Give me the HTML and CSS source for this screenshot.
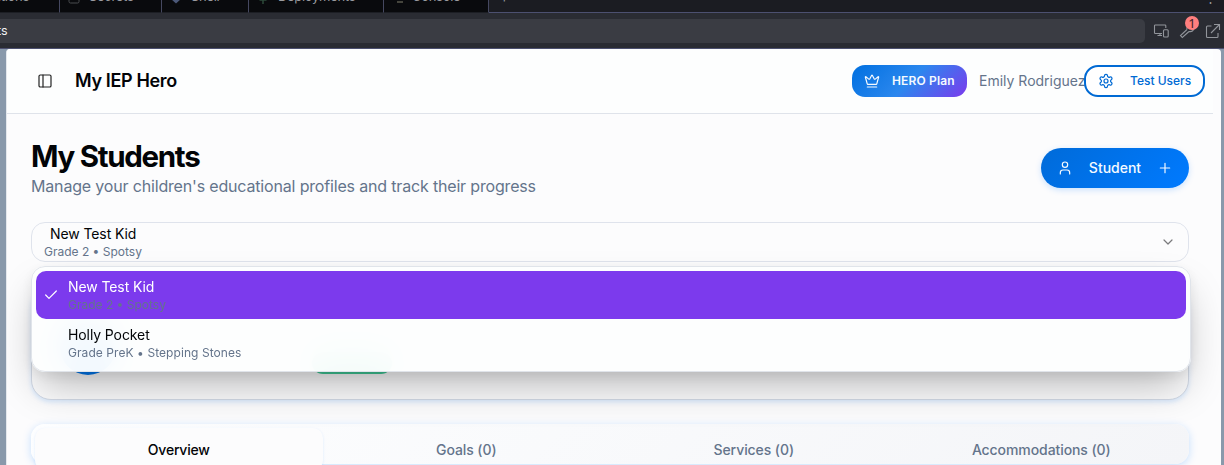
FILE: index.html
```html
<!DOCTYPE html>
<html lang="en">
<head>
<meta charset="utf-8">
<title>My IEP Hero</title>
<link rel="stylesheet" href="styles.css">
</head>
<body>
<nav class="ide-tabs">
  <div class="ide-tab tab-first"><span>Integrations</span></div>
  <div class="ide-tab tab-secrets"><svg width="12" height="14" viewBox="0 0 12 14"><rect x="1" y="4" width="10" height="9" rx="1.5" fill="none" stroke="#4a4c50"/></svg><span>Secrets</span></div>
  <div class="ide-tab tab-shell"><svg width="12" height="14" viewBox="0 0 12 14"><path d="M1 3h10v6l-5 4.500-5-4.500z" fill="#4b5878"/></svg><span>Shell</span></div>
  <div class="ide-tab tab-deploy"><svg width="12" height="14" viewBox="0 0 12 14"><path d="M6 2v12M2.500 10h7" stroke="#2c4a3a" stroke-width="1.500" fill="none"/></svg><span>Deployments</span></div>
  <div class="ide-tab tab-console"><svg width="14" height="14" viewBox="0 0 14 14"><path d="M1 9l3-3M6 12h6" stroke="#5a594e" stroke-width="1.500" fill="none"/></svg><span>Console</span></div>
  <div class="ide-rest"><span>+</span><span>⋮</span></div>
</nav>
<div class="ide-bar">
  <div class="address">ts</div>
  <svg class="tool" width="16" height="16" viewBox="0 0 16 16"><path d="M9 10.500H2.300a.8.800 0 0 1-.8-.8V2.800a.8.800 0 0 1 .8-.8h9.700a.8.800 0 0 1 .8.800V5M4.500 12.500h4.500M7 10.500v2"/><rect x="10.500" y="6.800" width="4.700" height="7.200" rx="1"/></svg>
  <div class="wrench"><svg class="tool" width="16" height="16" viewBox="0 0 16 16"><path d="M8 6.500L1.500 12.500l1.800 2L10 8.500M8 6.500c-.5-2 .5-4.500 3-5M10 8.500c2 .5 4-.5 4.800-2.500"/></svg><span class="count">1</span></div>
  <svg class="tool" width="16" height="16" viewBox="0 0 16 16"><path d="M6.500 3H2.500A1 1 0 0 0 1.500 4v9.500a1 1 0 0 0 1 1H12a1 1 0 0 0 1-1V10M9 1.500h5.500V7M14.500 1.500L6 10"/></svg>
</div>
<main class="preview">
  <div class="app">
    <header class="app-header">
      <svg class="line panel-icon" width="16" height="16" viewBox="0 0 24 24"><rect x="3" y="3" width="18" height="18" rx="2"/><path d="M9 3v18"/></svg>
      <div class="brand">My IEP Hero</div>
      <div class="plan"><svg class="line" width="16" height="16" viewBox="0 0 24 24"><path d="M11.562 3.266a.5.500 0 0 1 .876 0L15.390 8.870a1 1 0 0 0 1.516.294L21.183 5.500a.5.500 0 0 1 .798.519l-2.834 10.246a1 1 0 0 1-.956.734H5.810a1 1 0 0 1-.957-.734L2.020 6.020a.5.500 0 0 1 .798-.519l4.276 3.664a1 1 0 0 0 1.516-.294zM5 21h14"/></svg><span>HERO Plan</span></div>
      <div class="user">Emily Rodriguez</div>
      <div class="test-users"><svg class="line" width="16" height="16" viewBox="0 0 24 24"><path d="M12.220 2h-.44a2 2 0 0 0-2 2v.18a2 2 0 0 1-1 1.730l-.43.250a2 2 0 0 1-2 0l-.15-.08a2 2 0 0 0-2.730.730l-.22.380a2 2 0 0 0 .73 2.730l.15.100a2 2 0 0 1 1 1.720v.51a2 2 0 0 1-1 1.740l-.15.090a2 2 0 0 0-.73 2.730l.22.380a2 2 0 0 0 2.730.730l.15-.08a2 2 0 0 1 2 0l.43.250a2 2 0 0 1 1 1.730V20a2 2 0 0 0 2 2h.44a2 2 0 0 0 2-2v-.18a2 2 0 0 1 1-1.730l.43-.25a2 2 0 0 1 2 0l.15.080a2 2 0 0 0 2.730-.73l.22-.39a2 2 0 0 0-.73-2.730l-.15-.08a2 2 0 0 1-1-1.740v-.5a2 2 0 0 1 1-1.740l.15-.09a2 2 0 0 0 .73-2.730l-.22-.38a2 2 0 0 0-2.730-.73l-.15.080a2 2 0 0 1-2 0l-.43-.25a2 2 0 0 1-1-1.730V4a2 2 0 0 0-2-2z"/><circle cx="12" cy="12" r="3"/></svg><span>Test Users</span></div>
    </header>
    <section class="content">
      <div class="title-row">
        <div>
          <h1>My Students</h1>
          <p class="subtitle">Manage your children's educational profiles and track their progress</p>
        </div>
        <div class="add-student"><svg class="line" width="16" height="16" viewBox="0 0 24 24"><path d="M19 21v-2a4 4 0 0 0-4-4H9a4 4 0 0 0-4 4v2"/><circle cx="12" cy="7" r="4"/></svg><span>Student</span><svg class="line" width="16" height="16" viewBox="0 0 24 24"><path d="M5 12h14M12 5v14"/></svg></div>
      </div>
      <div class="picker">
        <div class="select">
          <div><div class="name selected-name">New Test Kid</div><div class="meta">Grade 2 • Spotsy</div></div>
          <svg class="line chevron" width="16" height="16" viewBox="0 0 24 24"><path d="m6 9 6 6 6-6"/></svg>
        </div>
        <div class="menu">
          <div class="option active"><svg class="line" width="16" height="16" viewBox="0 0 24 24"><path d="M20 6 9 17l-5-5"/></svg><div><div class="name">New Test Kid</div><div class="meta">Grade 2 • Spotsy</div></div></div>
          <div class="option"><i class="blank"></i><div><div class="name">Holly Pocket</div><div class="meta meta-wide">Grade PreK • Stepping Stones</div></div></div>
        </div>
      </div>
      <div class="card"><div class="avatar"></div><div class="badge"></div></div>
      <div class="tabs">
        <div class="tab current">Overview</div><div class="tab">Goals (0)</div><div class="tab">Services (0)</div><div class="tab">Accommodations (0)</div>
      </div>
    </section>
  </div>
</main>
</body>
</html>
```
FILE: styles.css
```css
* { box-sizing: border-box; }
body { margin: 0; width: 1224px; height: 465px; overflow: hidden; font-family: Inter, "Liberation Sans", sans-serif; color: #020407; }
svg { flex: none; display: block; }
.line { fill: none; stroke: currentColor; stroke-width: 1.8; stroke-linecap: round; stroke-linejoin: round; }

.ide-tabs { display: flex; align-items: flex-end; height: 13px; overflow: hidden; background: #090a0d; color: #9a9ca0; font-size: 13px; }
.ide-tab { display: flex; flex: none; gap: 9px; height: 29px; padding-top: 3px; border-right: 1px solid #454860; border-bottom: 1px solid #1c1e24; line-height: 18px; letter-spacing: -0.3px; }
.ide-tab svg { margin-top: 3px; }
.tab-first { width: 60px; justify-content: flex-end; padding-right: 30px; }
.tab-secrets { width: 102px; padding-left: 8px; }
.tab-shell { width: 87px; padding-left: 8px; }
.tab-deploy { width: 135px; padding-left: 8px; }
.tab-console { width: 105px; padding-left: 7px; gap: 7px; }
.ide-rest { display: flex; flex: 1; justify-content: space-between; height: 29px; padding: 4px 7px 0 11px; background: #1b1c22; border-bottom: 1px solid #4c5070; line-height: 18px; }

.ide-bar { display: flex; align-items: center; gap: 10px; height: 36px; padding-right: 3px; background: #2a2c33; border-bottom: 1px solid #4c5070; color: #92959b; }
.address { width: 1145px; height: 24px; flex: none; margin-right: -2px; border-radius: 0 5px 5px 0; background: #3a3c43; color: #f2f3f4; font-size: 12.5px; line-height: 24px; text-indent: -3px; }
.tool { fill: none; stroke: currentColor; stroke-width: 1.1; }
.wrench { position: relative; }
.count { position: absolute; left: 6px; top: -7px; width: 14px; height: 14px; border-radius: 50%; background: #ff7f7f; color: #3b2024; font-family: "Noto Sans", sans-serif; font-size: 13px; line-height: 14px; text-align: center; }

.preview { height: 416px; padding: 0 3px 0 6px; background: #8999ab; }
.app { height: 416px; border-left: 1px solid #e4e8ed; border-radius: 4px 4px 0 0; background: #fcfcfd; overflow: hidden; }
.app-header { display: flex; align-items: center; width: 1206px; height: 65px; padding: 0 8px 0 30px; background: #fdfefe; border-bottom: 1px solid #dfe3ea; }
.panel-icon { color: #222; }
.brand { margin-left: 22px; padding-bottom: 2px; font-size: 18px; font-weight: 600; letter-spacing: -0.35px; }
.plan { display: flex; align-items: center; gap: 12px; width: 115px; height: 32px; margin-left: auto; padding-left: 12px; border-radius: 13px; background: linear-gradient(135deg, #0070e0, #2b87ee 50%, #7c3aed); color: #f5faff; font-size: 12px; font-weight: 600; letter-spacing: 0.15px; white-space: nowrap; }
.plan span, .test-users span { padding-bottom: 1px; }
.user { width: 105px; margin-left: 12px; padding-bottom: 2px; color: #64748b; font-size: 14px; white-space: nowrap; }
.test-users { display: flex; align-items: center; gap: 16px; width: 121px; height: 32px; padding-left: 12px; border: 2px solid #006ad4; border-radius: 14px; background: #fff; color: #006ad4; font-size: 12px; font-weight: 500; white-space: nowrap; }

.content { width: 1206px; padding: 24px 24px 0; }
.title-row { display: flex; justify-content: space-between; align-items: center; height: 60px; }
h1 { margin: 0; padding-top: 1px; font-size: 29.5px; font-weight: 700; line-height: 35px; letter-spacing: -1.3px; }
.subtitle { margin: 0; color: #64748b; font-size: 16px; line-height: 24px; letter-spacing: -0.17px; }
.add-student { display: flex; align-items: center; width: 148px; height: 40px; padding: 0 16px; border-radius: 20px; background: linear-gradient(135deg, #006bd9, #007aff); box-shadow: 0 2px 6px #007aff33; color: #f5faff; font-size: 14px; font-weight: 500; }
.add-student span { margin: 0 auto; padding-bottom: 2px; }

.picker { position: relative; margin-top: 24px; z-index: 2; }
.select { display: flex; justify-content: space-between; align-items: center; height: 40px; padding: 0 12px; border: 1px solid #dfe3ec; border-radius: 14px; background: #fcfcfd; }
.name { font-size: 14px; line-height: 20px; letter-spacing: -0.1px; }
.selected-name { padding-left: 6px; }
.meta { color: #64748b; font-size: 12px; line-height: 16px; }
.meta-wide { letter-spacing: 0.07px; }
.chevron { color: #7a7a7c; }
.menu { position: absolute; left: 0; top: 44px; width: 1160px; height: 106px; padding: 4px; border: 1px solid #e0e4ea; border-radius: 14px; background: #fdfefef4; backdrop-filter: blur(16px); box-shadow: 0 20px 40px -8px #00000048, 0 4px 14px #00000012; }
.option { display: flex; align-items: center; gap: 9px; height: 48px; padding-left: 7px; border-radius: 10px; }
.active { background: #7c3aed; color: #fff; }
.blank { width: 16px; }

.card { display: flex; align-items: flex-end; gap: 210px; height: 114px; margin-top: 24px; padding: 0 0 24px 28px; border: 1px solid #d3dae6; border-radius: 20px; background: #fcfcfd; box-shadow: 0 2px 5px #007aff26; }
.avatar { width: 56px; height: 56px; border-radius: 50%; background: #0078f0; }
.badge { width: 80px; height: 22px; margin: 0 0 1px -14px; border-radius: 11px; background: #3fc997; }

.tabs { display: grid; grid-template-columns: repeat(4, 1fr); height: 40px; margin-top: 24px; padding: 4px 4px 0; border-radius: 14px; background: linear-gradient(135deg, #fdfeff, #f4f5f8); box-shadow: 0 2px 9px #007aff38; color: #64748b; font-size: 14px; font-weight: 500; letter-spacing: -0.08px; }
.tab { display: flex; align-items: center; justify-content: center; height: 42px; }
.current { border-radius: 10px; background: #fcfcfd; box-shadow: 0 1px 3px #007aff20; color: #020407; letter-spacing: -0.2px; }
```
